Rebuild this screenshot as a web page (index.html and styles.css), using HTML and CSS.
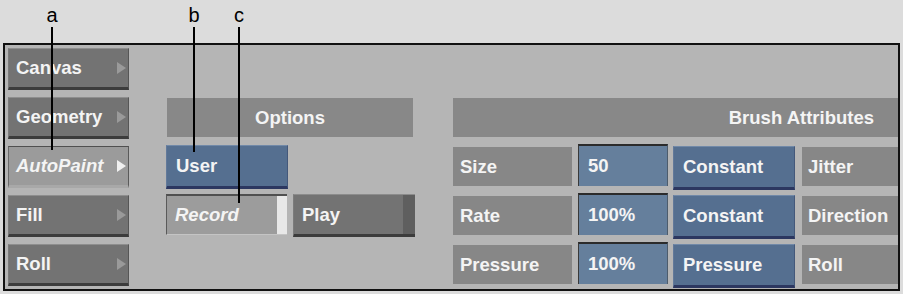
FILE: index.html
```html
<!DOCTYPE html>
<html lang="en">
<head>
  <meta charset="UTF-8">
  <meta name="viewport" content="width=device-width, initial-scale=1.0">
  <title>AutoPaint Options</title>
  <link rel="stylesheet" href="styles.css">
</head>
<body>

<div class="figure">

  <!-- Callouts -->
  <div class="callout callout-a">
    <div class="callout-label">a</div>
    <div class="callout-line"></div>
  </div>
  <div class="callout callout-b">
    <div class="callout-label">b</div>
    <div class="callout-line"></div>
  </div>
  <div class="callout callout-c">
    <div class="callout-label">c</div>
    <div class="callout-line"></div>
  </div>

  <div class="panel">

    <!-- Menu column -->
    <div class="menu">
      <div class="menu-btn">Canvas<span class="arrow"></span></div>
      <div class="menu-btn">Geometry<span class="arrow"></span></div>
      <div class="menu-btn active">AutoPaint<span class="arrow"></span></div>
      <div class="menu-btn">Fill<span class="arrow"></span></div>
      <div class="menu-btn">Roll<span class="arrow"></span></div>
    </div>

    <!-- Options -->
    <div class="options">
      <div class="header">Options</div>
      <div class="btn blue user-btn">User</div>
      <div class="record-row">
        <div class="record">Record<span class="record-bar"></span></div>
        <div class="play">Play<span class="play-end"></span></div>
      </div>
    </div>

    <!-- Brush Attributes -->
    <div class="brush">
      <div class="header header-right">Brush Attributes</div>
      <div class="attr-row">
        <div class="attr-label">Size</div>
        <div class="value">50</div>
        <div class="btn blue mode-btn">Constant</div>
        <div class="attr-label">Jitter</div>
      </div>
      <div class="attr-row">
        <div class="attr-label">Rate</div>
        <div class="value">100%</div>
        <div class="btn blue mode-btn">Constant</div>
        <div class="attr-label">Direction</div>
      </div>
      <div class="attr-row">
        <div class="attr-label">Pressure</div>
        <div class="value">100%</div>
        <div class="btn blue mode-btn">Pressure</div>
        <div class="attr-label">Roll</div>
      </div>
    </div>

  </div>
</div>

</body>
</html>
```

FILE: styles.css
```css
body {
  margin: 0;
  background-color: #dcdcdc;
  font-family: "Liberation Sans", Arial, sans-serif;
}

.figure {
  position: relative;
  height: 294px;
  padding: 43px 0 0 3px;
  box-sizing: border-box;
}

/* callouts */
.callout {
  position: absolute;
  top: 4px;
  width: 20px;
  z-index: 2;
}

.callout-a { left: 42px; }
.callout-b { left: 184px; }
.callout-c { left: 229px; }

.callout-label {
  font-size: 20px;
  line-height: 23px;
  text-align: center;
  color: #000;
}

.callout-line {
  width: 2px;
  margin: 0 auto;
  background-color: #000;
}

.callout-a .callout-line { height: 123px; }
.callout-b .callout-line { height: 125px; }
.callout-c .callout-line { height: 176px; }

/* panel */
.panel {
  display: flex;
  width: 897px;
  height: 248px;
  box-sizing: border-box;
  padding: 3px 0 0 3px;
  background-color: #b5b5b5;
  border: 2px solid #111;
  overflow: hidden;
  color: #f4f4f4;
  font-size: 18.5px;
  font-weight: bold;
}

.menu {
  display: flex;
  flex-direction: column;
  gap: 7px;
  width: 121px;
  flex-shrink: 0;
}

.menu-btn {
  position: relative;
  height: 42px;
  box-sizing: border-box;
  display: flex;
  align-items: center;
  padding-left: 7px;
  background-color: #737373;
  border-top: 1px solid #8e8e8e;
  border-left: 1px solid #7c7c7c;
  border-right: 1px solid #565656;
  border-bottom: 3px solid #3c3c3c;
}

.menu-btn.active {
  background-color: #9b9b9b;
  border-top: 1px solid #505050;
  border-left: 1px solid #6a6a6a;
  border-right: 1px solid #5a5a5a;
  border-bottom: 3px solid #a8a8a8;
  font-style: italic;
}

.arrow {
  position: absolute;
  right: 2px;
  top: 13px;
  width: 0;
  height: 0;
  border-top: 6px solid transparent;
  border-bottom: 6px solid transparent;
  border-left: 9px solid #9a9a9a;
}

.menu-btn.active .arrow {
  border-left-color: #f0f0f0;
}

/* shared */
.header {
  height: 39px;
  display: flex;
  align-items: center;
  justify-content: center;
  background-color: #888;
}

.header-right {
  justify-content: flex-end;
  padding-right: 24px;
}

.btn {
  box-sizing: border-box;
  display: flex;
  align-items: center;
  padding-left: 9px;
}

.blue {
  height: 44px;
  background-color: #556f90;
  border-top: 1px solid #7189a8;
  border-left: 1px solid #62799a;
  border-right: 1px solid #44587a;
  border-bottom: 3px solid #2c3760;
}

/* options */
.options {
  width: 249px;
  margin: 50px 0 0 37px;
  flex-shrink: 0;
}

.options .header {
  margin: 0 2px 0 1px;
}

.user-btn {
  width: 122px;
  margin-top: 8px;
}

.record-row {
  display: flex;
  gap: 6px;
  margin-top: 5px;
  align-items: flex-start;
}

.record {
  position: relative;
  width: 121px;
  height: 41px;
  box-sizing: border-box;
  display: flex;
  align-items: center;
  padding-left: 8px;
  background-color: #9c9c9c;
  border-top: 2px solid #505050;
  border-left: 1px solid #5a5a5a;
  border-bottom: 1px solid #c4c4c4;
  font-style: italic;
}

.record-bar {
  position: absolute;
  right: 0;
  top: 0;
  bottom: 0;
  width: 10px;
  background-color: #e8e8e8;
}

.play {
  position: relative;
  width: 122px;
  height: 43px;
  box-sizing: border-box;
  display: flex;
  align-items: center;
  padding-left: 8px;
  background-color: #737373;
  border-top: 1px solid #8c8c8c;
  border-left: 1px solid #7c7c7c;
  border-bottom: 3px solid #3c3c3c;
}

.play-end {
  position: absolute;
  right: 0;
  top: 0;
  bottom: 0;
  width: 12px;
  background-color: #5f5f5f;
}

/* brush attributes */
.brush {
  flex: 1;
  min-width: 0;
  margin: 50px 0 0 38px;
}

.attr-row {
  display: flex;
  align-items: flex-start;
  height: 44px;
  margin-top: 7px;
}

.attr-row + .attr-row {
  margin-top: 5px;
}

.attr-label {
  flex-shrink: 0;
  width: 119px;
  height: 39px;
  margin-top: 3px;
  box-sizing: border-box;
  display: flex;
  align-items: center;
  padding-left: 7px;
  background-color: #878787;
}

.attr-label:last-child {
  margin-left: 7px;
  padding-left: 6px;
}

.value {
  flex-shrink: 0;
  width: 90px;
  height: 42px;
  margin-left: 6px;
  box-sizing: border-box;
  display: flex;
  align-items: center;
  padding-left: 9px;
  background-color: #657f9c;
  border-top: 2px solid #2b2b2b;
  border-left: 1px solid #3a3a3a;
  border-right: 1px solid #4d5c6c;
}

.mode-btn {
  flex-shrink: 0;
  width: 122px;
  margin: 2px 0 0 5px;
}
```
